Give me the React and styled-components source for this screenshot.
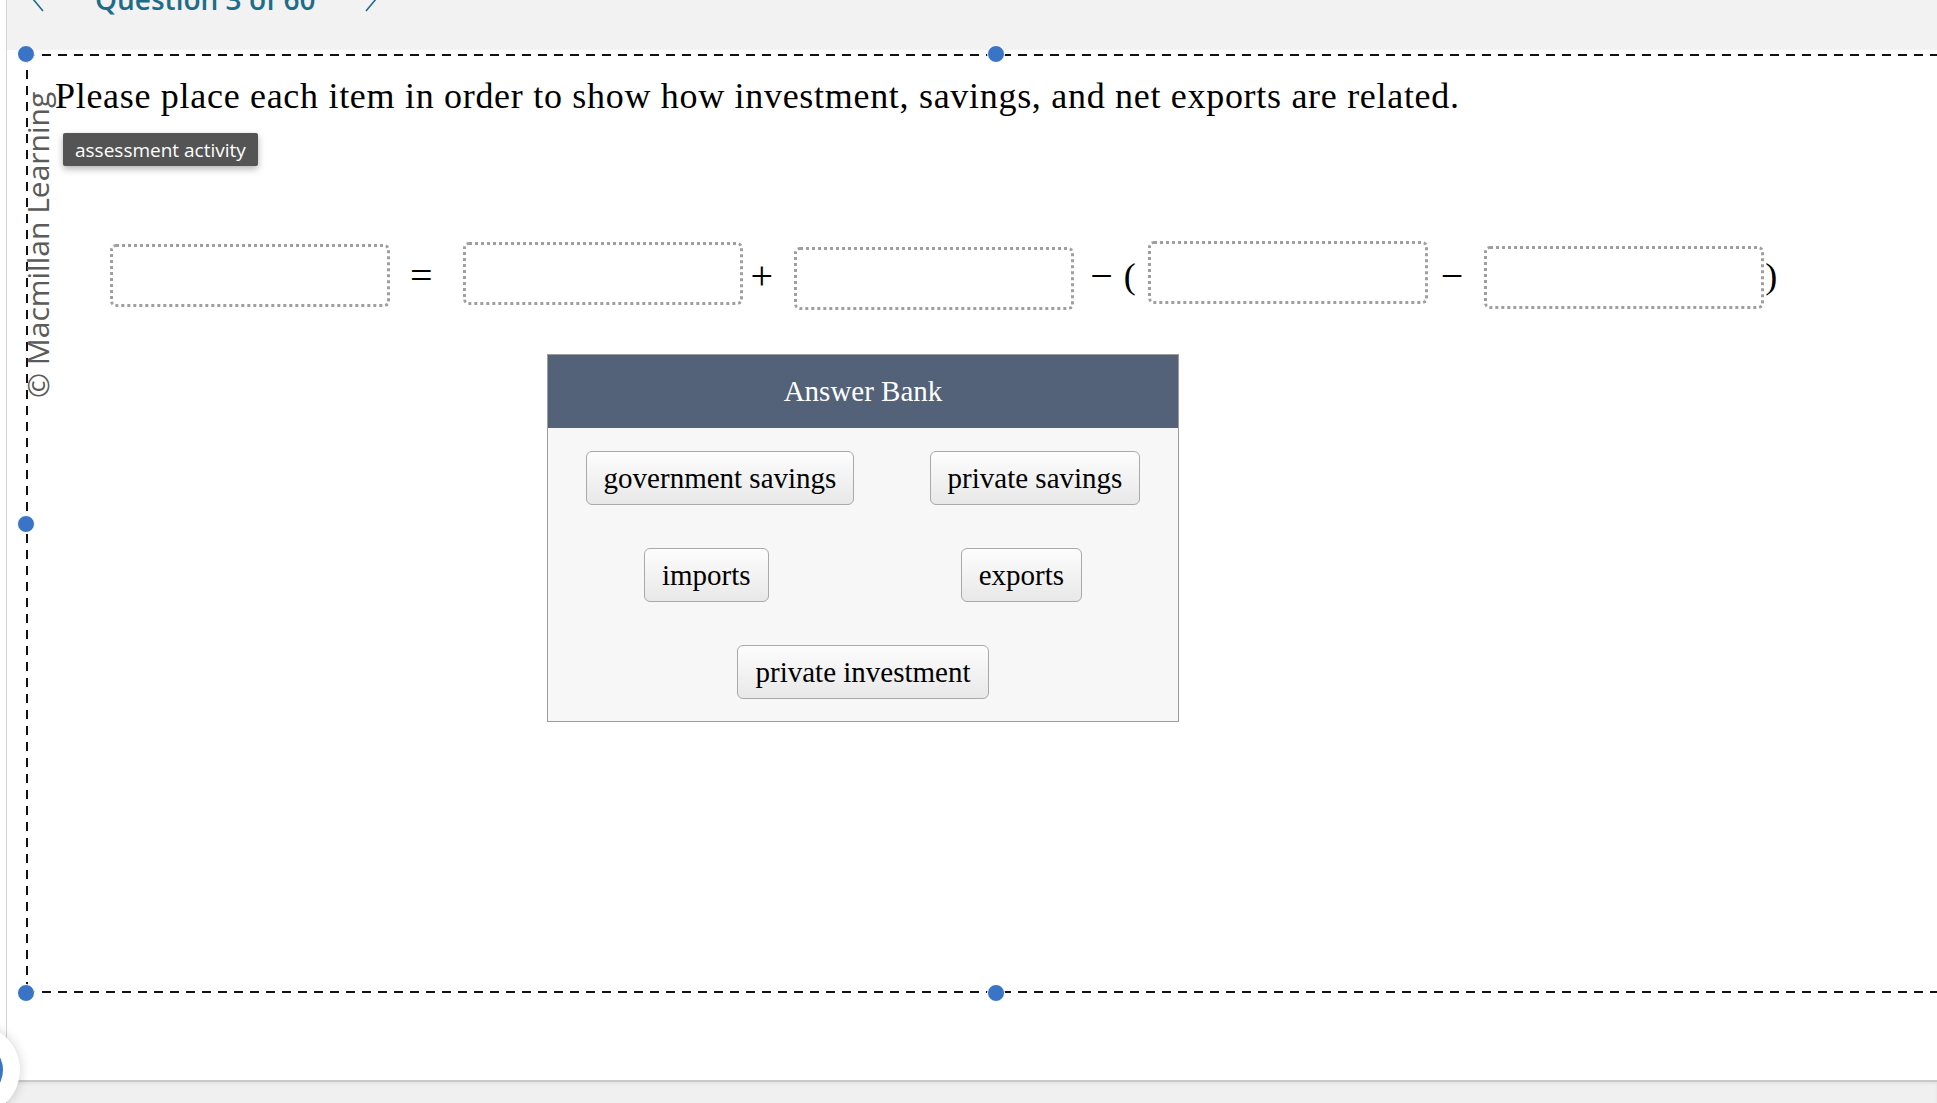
import React from 'react'
import styled, { createGlobalStyle } from 'styled-components'

const SERIF = `"Liberation Serif", "Times New Roman", serif`
const SANS = `"Open Sans", "Liberation Sans", Arial, sans-serif`

const GlobalStyle = createGlobalStyle`
  html, body {
    margin: 0;
    padding: 0;
    background: #fff;
    overflow: hidden;
  }
  * { box-sizing: border-box; }
`

const Page = styled.div`
  position: relative;
  width: 100vw;
  height: 1103px;
  padding-left: 6px;
  overflow: hidden;
`

const Shell = styled.div`
  height: 100%;
  border-left: 1px solid #d4d4d4;
  display: flex;
  flex-direction: column;
`

const TopBar = styled.div`
  height: 50px;
  flex: none;
  background: #f2f2f2;
  overflow: hidden;
`

const Nav = styled.nav`
  display: flex;
  align-items: center;
  margin-top: -15px;
  padding-left: 25px;
  color: #1d6d8a;
`

const NavTitle = styled.span`
  font-family: ${SANS};
  font-weight: 600;
  font-size: 28px;
  line-height: 28px;
  white-space: nowrap;
  margin: 0 ${p => p.$right}px 0 ${p => p.$left}px;
`

const Chevron = styled.svg`
  width: 12px;
  height: 26px;
  flex: none;
`

const Content = styled.main`
  flex: 1;
  position: relative;
  background: #fff;
`

// dashed selection outline, drawn with gradients so the dash rhythm is fixed
const dash = (dir) =>
  `repeating-linear-gradient(${dir}, #111 0 9px, transparent 9px 16px)`

const Frame = styled.section`
  position: relative;
  width: 1940px;
  height: 939px;
  margin: 4px 0 0 19px;
  padding: 22px 0 0 29px;
  background:
    ${dash('90deg')} left top / 100% 2px no-repeat,
    ${dash('90deg')} left bottom / 100% 2px no-repeat,
    ${dash('180deg')} left top / 2px 100% no-repeat;
`

const Handle = styled.span`
  position: absolute;
  width: 18px;
  height: 18px;
  margin: -9px 0 0 -9px;
  border-radius: 50%;
  background: #3a74c6;
  border: 1.5px solid #fff;
  left: ${p => p.$x};
  top: ${p => p.$y};
`

const Watermark = styled.span`
  position: absolute;
  left: -3px;
  top: 344px;
  transform: rotate(-90deg);
  transform-origin: 0 0;
  white-space: nowrap;
  font-family: ${SANS};
  font-size: 30px;
  line-height: 30px;
  color: #5b5b5b;
`

const Prompt = styled.p`
  margin: 0;
  font-family: ${SERIF};
  font-size: 36px;
  line-height: 40px;
  letter-spacing: 0.7px;
  color: #000;
  white-space: nowrap;
`

const Tip = styled.div`
  position: absolute;
  left: 37px;
  top: 79px;
  height: 33px;
  padding: 0 12px;
  display: flex;
  align-items: center;
  background: #545454;
  color: #fff;
  font-family: ${SANS};
  font-size: 19px;
  border-radius: 2px;
  box-shadow: 0 3px 7px rgba(0, 0, 0, 0.3);
`

const Equation = styled.div`
  display: flex;
  align-items: flex-start;
  height: 69px;
  margin: 125px 0 0 55px;
`

const Slot = styled.div`
  width: 280px;
  height: 63px;
  flex: none;
  margin-top: ${p => p.$top}px;
  border: 3px dotted #9f9f9f;
  border-radius: 6px;
`

const Op = styled.span`
  align-self: center;
  flex: none;
  font-family: ${SERIF};
  font-size: ${p => p.$size || 40}px;
  line-height: ${p => p.$size || 40}px;
  color: #000;
  margin: 0 ${p => p.$mr}px 0 ${p => p.$ml}px;
`

const Bank = styled.div`
  width: 632px;
  margin: 44px 0 0 492px;
  border: 1px solid #9c9c9c;
  background: #f7f7f7;
`

const BankHeader = styled.div`
  height: 73px;
  display: flex;
  align-items: center;
  justify-content: center;
  background: #546279;
  color: #fff;
  font-family: ${SERIF};
  font-size: 29px;
`

const BankBody = styled.div`
  display: flex;
  flex-direction: column;
  gap: 43px;
  padding: 23px 0 22px;
`

const ChipRow = styled.div`
  display: flex;
  justify-content: space-around;
`

const Chip = styled.div`
  height: 54px;
  padding: 0 17px;
  display: flex;
  align-items: center;
  border: 1px solid #a9a9a9;
  border-radius: 6px;
  background: linear-gradient(#fdfdfd, #e8e8e8);
  font-family: ${SERIF};
  font-size: 29px;
  color: #000;
  white-space: nowrap;
`

const BottomBar = styled.div`
  height: 23px;
  flex: none;
  background: #f0f0f0;
  border-top: 2px solid #c9c9c9;
  box-shadow: inset 0 2px 3px rgba(0, 0, 0, 0.06);
`

const Fab = styled.div`
  position: absolute;
  left: -70px;
  top: 1025px;
  width: 90px;
  height: 90px;
  border-radius: 50%;
  background: #fff;
  box-shadow: 0 0 12px rgba(0, 0, 0, 0.18);
  display: flex;
  align-items: center;
  justify-content: center;
`

const FabDot = styled.div`
  width: 56px;
  height: 56px;
  border-radius: 50%;
  background: #3a74c6;
`

const slots = [3, 1, 6, 0, 5]

export default function App() {
  return (
    <>
      <GlobalStyle />
      <Page>
        <Shell>
          <TopBar>
            <Nav>
              <Chevron viewBox="0 0 12 26" fill="none" stroke="#1d6d8a" strokeWidth="1.6">
                <path d="M11 1 L1 13 L11 25" />
              </Chevron>
              <NavTitle $left={51} $right={50}>Question 3 of 60</NavTitle>
              <Chevron viewBox="0 0 12 26" fill="none" stroke="#1d6d8a" strokeWidth="1.6">
                <path d="M1 1 L11 13 L1 25" />
              </Chevron>
            </Nav>
          </TopBar>
          <Content>
            <Frame>
              <Watermark>© Macmillan Learning</Watermark>
              <Prompt>
                Please place each item in order to show how investment, savings, and net exports are related.
              </Prompt>
              <Tip>assessment activity</Tip>
              <Equation>
                <Slot $top={slots[0]} />
                <Op $ml={20} $mr={30}>=</Op>
                <Slot $top={slots[1]} />
                <Op $ml={8} $mr={21}>+</Op>
                <Slot $top={slots[2]} />
                <Op $ml={16} $mr={11}>−</Op>
                <Op $size={36} $ml={0} $mr={12}>(</Op>
                <Slot $top={slots[3]} />
                <Op $ml={13} $mr={21}>−</Op>
                <Slot $top={slots[4]} />
                <Op $size={36} $ml={1} $mr={0}>)</Op>
              </Equation>
              <Bank>
                <BankHeader>Answer Bank</BankHeader>
                <BankBody>
                  <ChipRow>
                    <Chip>government savings</Chip>
                    <Chip>private savings</Chip>
                  </ChipRow>
                  <ChipRow>
                    <Chip>imports</Chip>
                    <Chip>exports</Chip>
                  </ChipRow>
                  <ChipRow>
                    <Chip>private investment</Chip>
                  </ChipRow>
                </BankBody>
              </Bank>
              <Handle $x="0px" $y="0px" />
              <Handle $x="50%" $y="0px" />
              <Handle $x="0px" $y="50%" />
              <Handle $x="0px" $y="100%" />
              <Handle $x="50%" $y="100%" />
            </Frame>
          </Content>
          <BottomBar />
        </Shell>
        <Fab>
          <FabDot />
        </Fab>
      </Page>
    </>
  )
}
